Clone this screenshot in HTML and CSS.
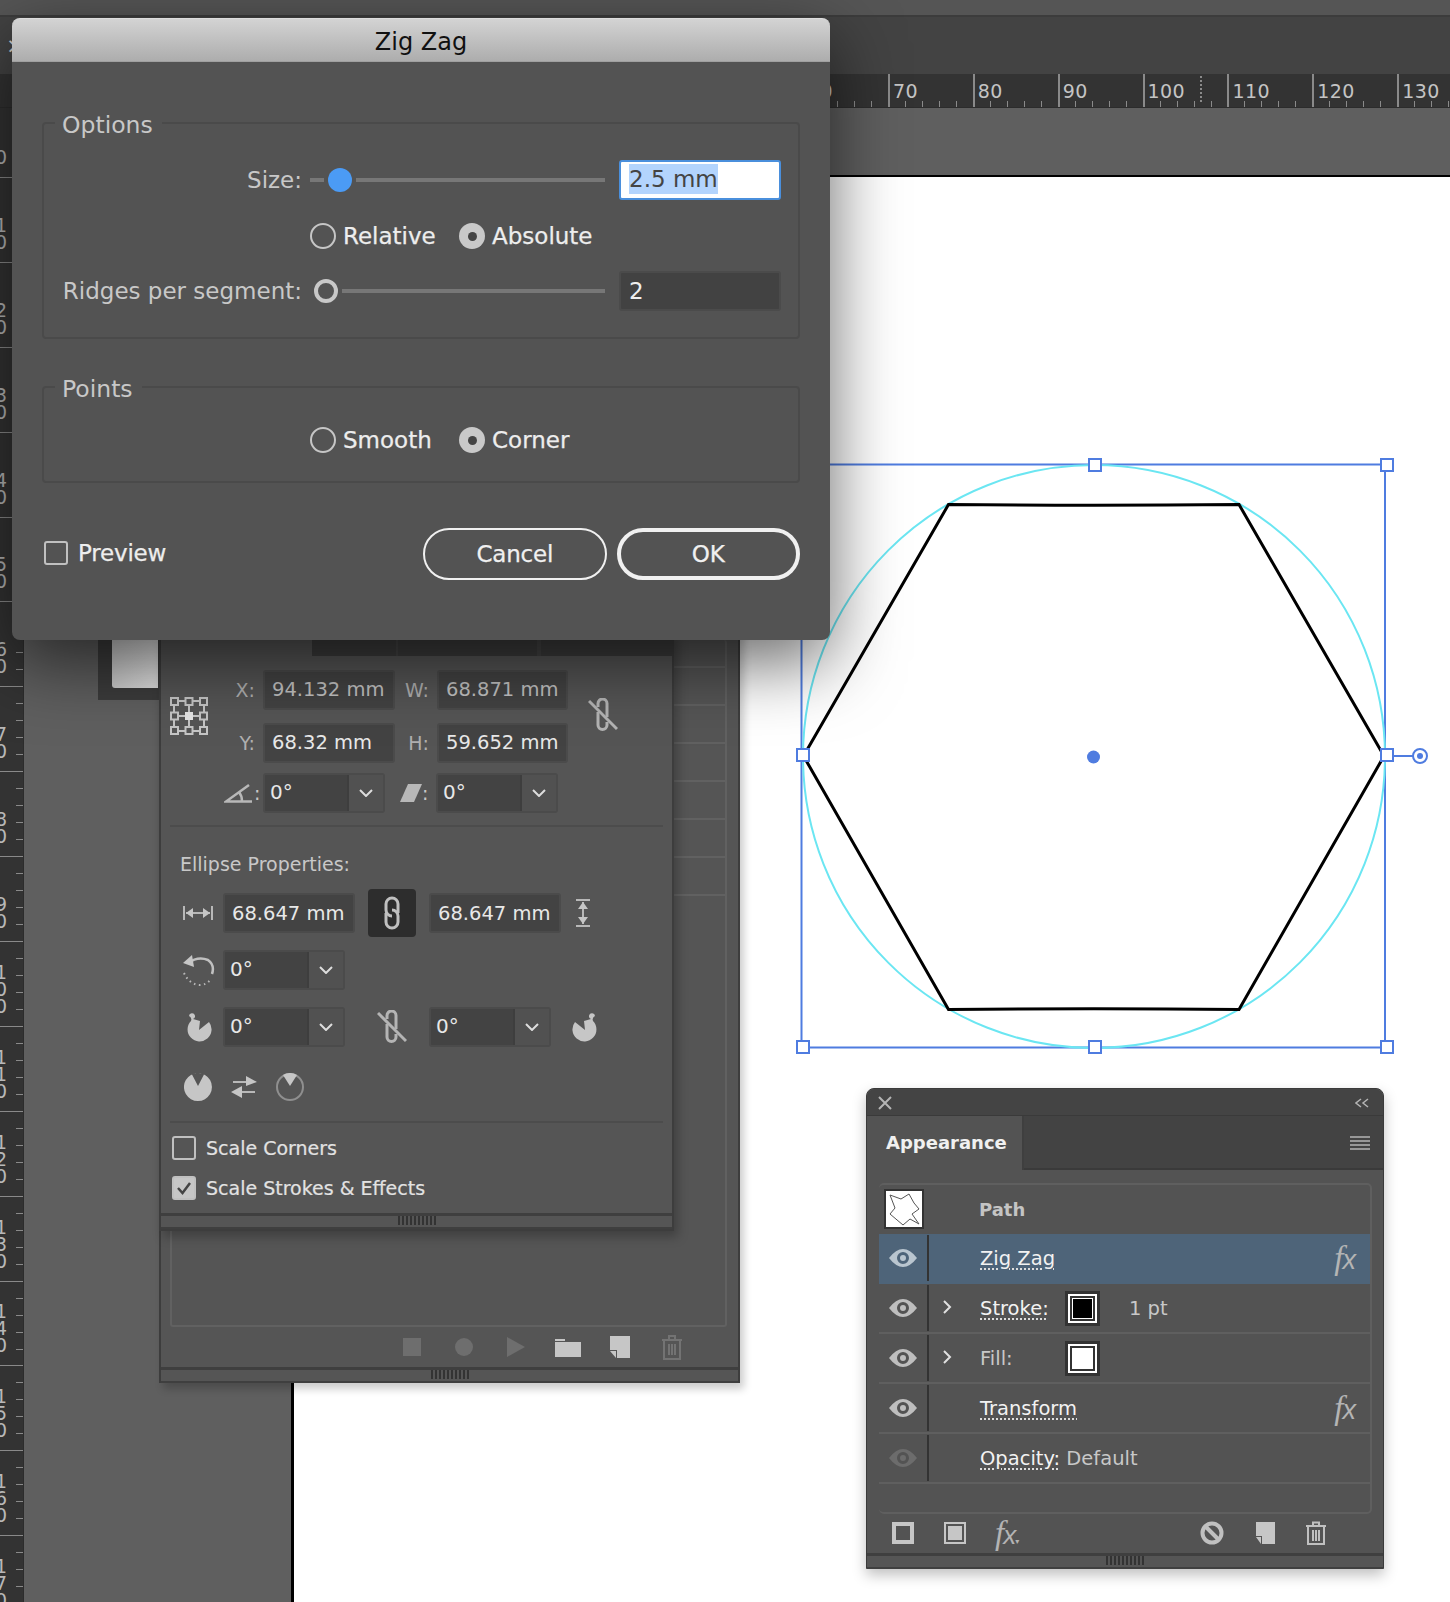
FILE: index.html
```html
<!DOCTYPE html>
<html lang="en">
<head>
<meta charset="utf-8">
<title>Zig Zag</title>
<link rel="stylesheet" href="styles.css">
</head>
<body>
<div class="app">
  <div class="menubar"></div>
  <div class="controlbar"><span class="stray-x">×</span></div>
  <div class="hruler">
    <div class="hr-cell"><span>60</span></div>
    <div class="hr-cell"><span>70</span></div>
    <div class="hr-cell"><span>80</span></div>
    <div class="hr-cell"><span>90</span></div>
    <div class="hr-cell"><span>100</span></div>
    <div class="hr-cell"><span>110</span></div>
    <div class="hr-cell"><span>120</span></div>
    <div class="hr-cell"><span>130</span></div>
    <i class="hr-mark"></i>
  </div>
  <div class="workspace">
    <div class="vruler">
      <div class="vr-cell vr-first"><b>0</b></div>
      <div class="vr-cell"><b>1</b><b>0</b></div>
      <div class="vr-cell"><b>2</b><b>0</b></div>
      <div class="vr-cell"><b>3</b><b>0</b></div>
      <div class="vr-cell"><b>4</b><b>0</b></div>
      <div class="vr-cell"><b>5</b><b>0</b></div>
      <div class="vr-cell"><b>6</b><b>0</b></div>
      <div class="vr-cell"><b>7</b><b>0</b></div>
      <div class="vr-cell"><b>8</b><b>0</b></div>
      <div class="vr-cell"><b>9</b><b>0</b></div>
      <div class="vr-cell"><b>1</b><b>0</b><b>0</b></div>
      <div class="vr-cell"><b>1</b><b>1</b><b>0</b></div>
      <div class="vr-cell"><b>1</b><b>2</b><b>0</b></div>
      <div class="vr-cell"><b>1</b><b>3</b><b>0</b></div>
      <div class="vr-cell"><b>1</b><b>4</b><b>0</b></div>
      <div class="vr-cell"><b>1</b><b>5</b><b>0</b></div>
      <div class="vr-cell"><b>1</b><b>6</b><b>0</b></div>
      <div class="vr-cell"><b>1</b><b>7</b><b>0</b></div>
    </div>
    <div class="pasteboard">
      <div class="artboard"></div>
    </div>
  </div>

  <svg class="artwork" width="650" height="620" viewBox="790 450 650 620">
    <polyline class="art-bbox" points="800,464.500 1385,464.500 1385,1047.500 801.500,1047.500 801.500,640"/>
    <ellipse class="art-circle" cx="1094" cy="756.500" rx="291" ry="291.500"/>
    <path class="art-hex" d="M803.500 756 L948.500 504.500 Q1094 506 1239 504.500 L1384 756 L1239 1009.500 Q1094 1008 948.500 1009.500 Z"/>
    <path class="art-bbox" d="M1388 756H1413"/>
    <circle class="art-rot" cx="1420" cy="756" r="7"/>
    <circle class="art-dot" cx="1420" cy="756" r="3"/>
    <circle class="art-dot" cx="1093.500" cy="757" r="6.500"/>
    <g class="art-handles">
      <rect x="1089" y="459" width="12" height="12"/>
      <rect x="1381" y="459" width="12" height="12"/>
      <rect x="797" y="749" width="12" height="12"/>
      <rect x="1381" y="749" width="12" height="12"/>
      <rect x="797" y="1041" width="12" height="12"/>
      <rect x="1089" y="1041" width="12" height="12"/>
      <rect x="1381" y="1041" width="12" height="12"/>
    </g>
  </svg>

  <section class="win actions-panel">
    <div class="act-list">
      <div class="act-row"></div><div class="act-row"></div><div class="act-row"></div>
      <div class="act-row"></div><div class="act-row"></div><div class="act-row"></div><div class="act-row"></div>
    </div>
    <div class="act-tools">
      <svg width="22" height="22" viewBox="0 0 22 22" class="ic-dim"><rect x="2" y="2" width="18" height="18"/></svg>
      <svg width="22" height="22" viewBox="0 0 22 22" class="ic-dim"><circle cx="11" cy="11" r="9"/></svg>
      <svg width="22" height="22" viewBox="0 0 22 22" class="ic-dim"><path d="M2 1L20 11L2 21Z"/></svg>
      <svg width="28" height="22" viewBox="0 0 28 22" class="ic-on"><path d="M1 3H11V5H1ZM1 6H27V21H1Z"/></svg>
      <svg width="22" height="24" viewBox="0 0 22 24" class="ic-on"><path d="M1 1H21V23H8V15H1Z"/><path d="M1 16H7V23Z"/></svg>
      <svg width="22" height="26" viewBox="0 0 22 26" class="ic-line-dim"><path d="M1 6H21M8 6V2H14V6M3 6V25H19V6M8 10V21M11 10V21M14 10V21"/></svg>
    </div>
    <div class="grip-bar"><div class="grip"></div></div>
  </section>

  <div class="win stub"><div class="stub-light"></div></div>

  <section class="win transform">
    <div class="tf-tabs"><i></i><i></i><i></i></div>
    <div class="tf-top">
      <svg class="anchor" width="38" height="38" viewBox="0 0 38 38">
        <path d="M9 4H15M23 4H29M9 19H15M23 19H29M9 34H15M23 34H29M4 9V15M19 9V15M34 9V15M4 23V29M19 23V29M34 23V29"/>
        <g class="anchor-cells">
          <rect x="1" y="1" width="7" height="7"/><rect x="15.500" y="1" width="7" height="7"/><rect x="30" y="1" width="7" height="7"/>
          <rect x="1" y="15.500" width="7" height="7"/><rect x="30" y="15.500" width="7" height="7"/>
          <rect x="1" y="30" width="7" height="7"/><rect x="15.500" y="30" width="7" height="7"/><rect x="30" y="30" width="7" height="7"/>
        </g>
        <rect class="anchor-on" x="15" y="15" width="8" height="8"/>
      </svg>
      <div class="tf-grid">
        <span class="lbl">X:</span><div class="field dim">94.132 mm</div>
        <span class="lbl">W:</span><div class="field dim">68.871 mm</div>
        <span class="lbl">Y:</span><div class="field">68.32 mm</div>
        <span class="lbl">H:</span><div class="field">59.652 mm</div>
      </div>
      <svg class="linkoff linkoff-top" width="30" height="34" viewBox="0 0 30 34">
        <path d="M10 9V5.500A4.500 4.500 0 0 1 19 5.500V19M10 14V27A4.500 4.500 0 0 0 19 27V24"/>
        <path d="M1 3L29 31"/>
      </svg>
    </div>
    <div class="tf-row3">
      <span class="lbl-ic">
        <svg width="30" height="20" viewBox="0 0 30 20"><path class="angle" d="M25 2L2 18.500H28M15 9Q18 13 18 18"/></svg>:
      </span>
      <div class="dd w122"><span>0°</span><em><svg width="14" height="8" viewBox="0 0 14 8"><path d="M1 1L7 7L13 1"/></svg></em></div>
      <span class="lbl-ic shear">
        <svg width="22" height="20" viewBox="0 0 22 20"><path d="M8 1H22L14 19H0Z"/></svg>:
      </span>
      <div class="dd w122"><span>0°</span><em><svg width="14" height="8" viewBox="0 0 14 8"><path d="M1 1L7 7L13 1"/></svg></em></div>
    </div>
    <hr class="sep">
    <h4 class="ell-title">Ellipse Properties:</h4>
    <div class="ell-row r1">
      <svg class="ic-w" width="30" height="16" viewBox="0 0 30 16"><path class="st" d="M1 1V15M29 1V15M3 8H27"/><path class="fl" d="M3 8L10 3V13ZM27 8L20 3V13Z"/></svg>
      <div class="field fw132">68.647 mm</div>
      <button class="linkbtn"><svg width="18" height="34" viewBox="0 0 18 34"><path d="M15 17V8A6 6 0 0 0 3 8V14A6 6 0 0 0 9 20"/><path d="M3 17V26A6 6 0 0 0 15 26V20A6 6 0 0 0 9 14"/></svg></button>
      <div class="field fw132">68.647 mm</div>
      <svg class="ic-h" width="14" height="28" viewBox="0 0 14 28"><path class="st" d="M0 1H14M0 27H14M7 3V25"/><path class="fl" d="M7 3L12 10H2ZM7 25L12 18H2Z"/></svg>
    </div>
    <div class="ell-row r2">
      <svg class="ic-rot" width="32" height="32" viewBox="0 0 32 32">
        <path class="st3" d="M5 9Q15 2 25 6Q32 11 29 20"/><path class="fl" d="M0 9L9 1L11 13Z"/>
        <path class="dots" d="M1 19Q6 30 16 31Q24 31 28 25"/>
      </svg>
      <div class="dd w122"><span>0°</span><em><svg width="14" height="8" viewBox="0 0 14 8"><path d="M1 1L7 7L13 1"/></svg></em></div>
    </div>
    <div class="ell-row r3">
      <svg class="ic-pie" width="26" height="30" viewBox="0 0 26 30"><path class="fl" d="M14 9L13 18L23 10A12 12 0 1 1 5 9A4 4 0 0 0 3 4A3 3 0 1 1 7 7Z"/></svg>
      <div class="dd w122"><span>0°</span><em><svg width="14" height="8" viewBox="0 0 14 8"><path d="M1 1L7 7L13 1"/></svg></em></div>
      <svg class="linkoff mid" width="30" height="34" viewBox="0 0 30 34">
        <path d="M10 9V5.500A4.500 4.500 0 0 1 19 5.500V19M10 14V27A4.500 4.500 0 0 0 19 27V24"/>
        <path d="M1 3L29 31"/>
      </svg>
      <div class="dd w122"><span>0°</span><em><svg width="14" height="8" viewBox="0 0 14 8"><path d="M1 1L7 7L13 1"/></svg></em></div>
      <svg class="ic-pie2" width="26" height="30" viewBox="0 0 26 30"><path class="fl" d="M12 9L13 18L3 10A12 12 0 1 0 21 9A4 4 0 0 1 23 4A3 3 0 1 0 19 7Z"/></svg>
    </div>
    <div class="ell-row r4">
      <svg width="28" height="28" viewBox="0 0 28 28"><path class="fl" d="M14 0A14 14 0 1 1 13.900 0ZM8 1.500L14 13L20 1.500A14 14 0 0 0 8 1.500Z" fill-rule="evenodd"/></svg>
      <svg class="ic-swap" width="26" height="22" viewBox="0 0 26 22"><path class="st" d="M2 6H18M8 16H24"/><path class="fl" d="M26 6L15 0V10ZM0 16L11 10V22Z"/></svg>
      <svg class="ic-pieo" width="28" height="28" viewBox="0 0 28 28"><circle class="st" cx="14" cy="14" r="13"/><path class="fl" d="M7 2L14 13L21 2A14 14 0 0 0 7 2Z"/></svg>
    </div>
    <hr class="sep s2">
    <label class="chk chk1"><i class="box"></i>Scale Corners</label>
    <label class="chk"><i class="box on"><svg width="16" height="14" viewBox="0 0 16 14"><path d="M2 7L6.500 12L14 2"/></svg></i>Scale Strokes &amp; Effects</label>
    <div class="grip-bar"><div class="grip"></div></div>
  </section>

  <section class="win dialog">
    <header class="dlg-title">Zig Zag</header>
    <div class="dlg-body">
      <fieldset class="group g-options">
        <legend>Options</legend>
        <div class="opt-row size-row">
          <span class="opt-label">Size:</span>
          <div class="slider"><i class="track t-short"></i><i class="thumb blue"></i><i class="track"></i></div>
          <div class="num focus"><mark>2.5 mm</mark></div>
        </div>
        <div class="radio-row r-mid">
          <label class="radio"><i class="rd"></i>Relative</label>
          <label class="radio sec"><i class="rd on"></i>Absolute</label>
        </div>
        <div class="opt-row ridge-row">
          <span class="opt-label">Ridges per segment:</span>
          <div class="slider"><i class="thumb ring"></i><i class="track"></i></div>
          <div class="num">2</div>
        </div>
      </fieldset>
      <fieldset class="group g-points">
        <legend>Points</legend>
        <div class="radio-row">
          <label class="radio"><i class="rd"></i>Smooth</label>
          <label class="radio sec"><i class="rd on"></i>Corner</label>
        </div>
      </fieldset>
      <div class="dlg-foot">
        <label class="preview"><i class="box big"></i>Preview</label>
        <div class="btns">
          <button class="btn">Cancel</button>
          <button class="btn primary">OK</button>
        </div>
      </div>
    </div>
  </section>

  <section class="win appearance">
    <div class="ap-head">
      <svg class="ap-x" width="14" height="14" viewBox="0 0 14 14"><path d="M1 1L13 13M13 1L1 13"/></svg>
      <svg class="ap-coll" width="14" height="10" viewBox="0 0 14 10"><path d="M6 1L1 5L6 9M13 1L8 5L13 9"/></svg>
    </div>
    <div class="ap-tabs">
      <div class="ap-tab">Appearance</div>
      <svg class="ap-menu" width="20" height="14" viewBox="0 0 20 14"><path d="M0 1H20M0 5H20M0 9H20M0 13H20"/></svg>
    </div>
    <div class="ap-list">
      <div class="ap-row ap-path">
        <div class="thumb-box"><svg width="34" height="34" viewBox="0 0 34 34"><path d="M3 3L14 7L22 2L27 11L32 17L25 22L32 32L23 27L16 33L3 22L8 16Z"/></svg></div>
        <span class="ap-name muted b">Path</span>
      </div>
      <div class="ap-row sel">
        <span class="eye"><svg width="28" height="18" viewBox="0 0 28 18"><path class="eye-s" fill-rule="evenodd" d="M0 9Q7 0 14 0T28 9Q21 18 14 18T0 9ZM14 3A6 6 0 1 0 14 15A6 6 0 1 0 14 3ZM14 6A3 3 0 1 1 14 12A3 3 0 1 1 14 6Z"/></svg></span>
        <span class="ap-name"><u>Zig Zag</u></span>
        <span class="fx"><i>f</i>x</span>
      </div>
      <div class="ap-row">
        <span class="eye"><svg width="28" height="18" viewBox="0 0 28 18"><path class="eye-s" fill-rule="evenodd" d="M0 9Q7 0 14 0T28 9Q21 18 14 18T0 9ZM14 3A6 6 0 1 0 14 15A6 6 0 1 0 14 3ZM14 6A3 3 0 1 1 14 12A3 3 0 1 1 14 6Z"/></svg></span>
        <svg class="chev" width="9" height="14" viewBox="0 0 9 14"><path d="M1 1L7 7L1 13"/></svg>
        <span class="ap-name tight"><u>Stroke:</u></span>
        <span class="swatch black"><i><b></b></i></span>
        <span class="ap-val">1 pt</span>
      </div>
      <div class="ap-row">
        <span class="eye"><svg width="28" height="18" viewBox="0 0 28 18"><path class="eye-s" fill-rule="evenodd" d="M0 9Q7 0 14 0T28 9Q21 18 14 18T0 9ZM14 3A6 6 0 1 0 14 15A6 6 0 1 0 14 3ZM14 6A3 3 0 1 1 14 12A3 3 0 1 1 14 6Z"/></svg></span>
        <svg class="chev" width="9" height="14" viewBox="0 0 9 14"><path d="M1 1L7 7L1 13"/></svg>
        <span class="ap-name tight fillname">Fill:</span>
        <span class="swatch"><i><b></b></i></span>
      </div>
      <div class="ap-row">
        <span class="eye"><svg width="28" height="18" viewBox="0 0 28 18"><path class="eye-s" fill-rule="evenodd" d="M0 9Q7 0 14 0T28 9Q21 18 14 18T0 9ZM14 3A6 6 0 1 0 14 15A6 6 0 1 0 14 3ZM14 6A3 3 0 1 1 14 12A3 3 0 1 1 14 6Z"/></svg></span>
        <span class="ap-name"><u>Transform</u></span>
        <span class="fx"><i>f</i>x</span>
      </div>
      <div class="ap-row">
        <span class="eye off"><svg width="28" height="18" viewBox="0 0 28 18"><path class="eye-s" fill-rule="evenodd" d="M0 9Q7 0 14 0T28 9Q21 18 14 18T0 9ZM14 3A6 6 0 1 0 14 15A6 6 0 1 0 14 3ZM14 6A3 3 0 1 1 14 12A3 3 0 1 1 14 6Z"/></svg></span>
        <span class="ap-name"><u>Opacity:</u> <span class="ap-def">Default</span></span>
      </div>
    </div>
    <div class="ap-tools">
      <svg width="22" height="22" viewBox="0 0 22 22"><path class="fl" fill-rule="evenodd" d="M0 0H22V22H0ZM4 4V18H18V4Z"/></svg>
      <svg class="t2" width="22" height="22" viewBox="0 0 22 22"><path class="fl" fill-rule="evenodd" d="M0 0H22V22H0ZM2 2V20H20V2Z"/><rect class="fl" x="4" y="4" width="14" height="14"/></svg>
      <span class="fx t3"><i>f</i>x<small>▾</small></span>
      <svg class="t4" width="24" height="24" viewBox="0 0 24 24"><circle class="st3" cx="12" cy="12" r="9.500"/><path class="st3" d="M5 5L19 19"/></svg>
      <svg class="t5" width="21" height="24" viewBox="0 0 21 24"><path class="fl" d="M1 1H20V23H7V15H1Z"/><path class="fl" d="M1 16H6V23Z"/></svg>
      <svg class="t6" width="22" height="24" viewBox="0 0 22 24"><path class="st2" d="M1 5H21M8 5V1.500H14V5M3 5V23H19V5M8 9V20M11 9V20M14 9V20"/></svg>
    </div>
    <div class="grip-bar"><div class="grip"></div></div>
  </section>
</div>
</body>
</html>
```
FILE: styles.css
```css
* { box-sizing: border-box; }
html, body { margin: 0; padding: 0; }
body { width: 1450px; height: 1602px; overflow: hidden; background: #5f5f5f; font-family: "DejaVu Sans", sans-serif; }
.app { position: relative; width: 1450px; height: 1602px; overflow: hidden; display: flex; flex-direction: column; }

/* chrome */
.menubar { height: 17px; flex: none; background: #555; border-bottom: 2px solid #3c3c3c; }
.controlbar { height: 57px; flex: none; background: #434343; position: relative; }
.stray-x { position: absolute; left: 6px; top: 17px; color: #d0d0d0; font-size: 22px; line-height: 24px; }
.hruler {
  height: 34px; flex: none; background: #333; padding-left: 803px; display: flex; position: relative; overflow: hidden;
  border-bottom: 1px solid #2c2c2c;
}
.hr-cell {
  flex: 0 0 84.9px; height: 100%; position: relative; color: #c4c4c4; font-size: 19px; line-height: 24px; letter-spacing: .4px;
  border-left: 2px solid #8a8a8a;
  background: repeating-linear-gradient(to right, transparent 0, transparent 15px, #8a8a8a 15px, #8a8a8a 16px, transparent 16px, transparent 17px) 0 100% / 100% 6px no-repeat;
}
.hr-cell span { display: block; padding: 5px 0 0 3px; }
.hr-mark { position: absolute; left: 1200px; top: 2px; height: 26px; border-left: 2px dotted #8a8a8a; }

.workspace { flex: 1; display: flex; min-height: 0; }
.vruler {
  width: 24px; flex: none; background: #333; overflow: hidden; position: relative;
  padding-top: 0; border-right: 1px solid #2c2c2c;
}
.vr-cell {
  height: 84.9px; display: flex; flex-direction: column; justify-content: flex-end; padding-bottom: 11px; overflow: hidden;
  border-bottom: 1px solid #8a8a8a;
  background: repeating-linear-gradient(to bottom, transparent 0, transparent 16px, #8a8a8a 16px, #8a8a8a 17px) 100% 0 / 7px 100% no-repeat;
}
.vr-first { height: 70px; }
.vr-cell b { display: block; font-weight: 400; font-size: 19px; line-height: 17px; color: #b8b8b8; margin-left: -5px; }
.pasteboard { flex: 1; background: #5f5f5f; padding: 67px 0 0 267px; }
.artboard { height: 100%; background: #fff; border-top: 2px solid #000; border-left: 3px solid #000; }

/* artwork */
.artwork { position: absolute; left: 790px; top: 450px; fill: none; }
.art-bbox { fill: none; stroke: #4f7ce0; stroke-width: 2; }
.art-circle { fill: none; stroke: #6be6f2; stroke-width: 2; }
.art-hex { fill: none; stroke: #000; stroke-width: 3; stroke-linejoin: miter; }
.art-rot { fill: #fff; stroke: #4f7ce0; stroke-width: 2; }
.art-dot { fill: #4f7ce0; }
.art-handles rect { fill: #fff; stroke: #4f7ce0; stroke-width: 2; }

/* windows */
.win { position: absolute; }
.stub { left: 98px; top: 620px; width: 70px; height: 80px; background: #3c3c3c; padding: 0 10px 12px 14px; }
.stub-light { height: 100%; background: linear-gradient(to right, #ccc, #e2e2e2); border-radius: 0 0 0 3px; }

.actions-panel {
  left: 159px; top: 625px; width: 581px; height: 758px; background: #555;
  border: 2px solid #3d3d3d; border-top: none;
  box-shadow: 4px 6px 8px rgba(0,0,0,.2);
  display: flex; flex-direction: column;
}
.act-list {
  margin: 15px 11px 0 9px; height: 687px; flex: none; border: 2px solid #616161; border-top: 0; border-radius: 3px; display: flex; flex-direction: column;
}
.act-row { height: 38px; flex: none; border-bottom: 2px solid #616161; }
.act-row:first-child { height: 28px; }
.act-tools { height: 40px; flex: none; display: flex; align-items: center; padding: 0 0 0 240px; gap: 30px; }
.act-tools svg:nth-child(4) { margin: 0 -3px; }
.ic-dim { fill: #6e6e6e; }
.ic-on { fill: #c6c6c6; }
.ic-line-dim { fill: none; stroke: #737373; stroke-width: 2; }
.grip-bar { height: 16px; flex: none; border-top: 3px solid #3f3f3f; border-bottom: 2px solid #3f3f3f; background: #555; display: flex; justify-content: center; }
.grip { width: 38px; height: 9px; background: repeating-linear-gradient(to right, #333 0, #333 2px, transparent 2px, transparent 4px); }
.actions-panel .grip-bar { margin-top: auto; }

.transform {
  left: 159px; top: 630px; width: 515px; height: 601px; background: #555;
  border: 2px solid #3d3d3d; border-top: none; padding: 10px 0 0 0;
  box-shadow: 4px 6px 10px rgba(0,0,0,.25);
  display: flex; flex-direction: column; color: #c8c8c8;
}
.tf-tabs { position: absolute; left: 151px; top: 8px; width: 362px; height: 18px; display: flex; background: #3c3c3c; }
.tf-tabs i { display: block; border-right: 2px solid #444; }
.tf-tabs i:nth-child(1) { width: 86px; }
.tf-tabs i:nth-child(2) { width: 141px; }
.tf-top { display: flex; align-items: center; margin-top: 30px; padding-left: 9px; height: 92px; }
.anchor { fill: none; stroke: #c6c6c6; stroke-width: 2; flex: none; }
.anchor-cells rect { fill: #555; stroke: #c6c6c6; stroke-width: 2; }
.anchor-on { fill: #e6e6e6; stroke: none; }
.tf-grid { display: grid; grid-template-columns: 47px 132px 42px 131px; row-gap: 13px; align-items: center; margin-left: 8px; }
.lbl { text-align: right; padding-right: 8px; font-size: 19px; font-weight: 400; color: #b0b0b0; }
.field {
  height: 40px; background: #434343; border: 2px solid #4b4b4b; border-radius: 3px; color: #e8e8e8;
  font-size: 19.500px; line-height: 35px; padding-left: 7px; white-space: nowrap;
}
.field.dim { color: #c4c4c4; }
.linkoff { fill: none; stroke: #b4b4b4; stroke-width: 3; flex: none; }
.linkoff-top { margin-left: 20px; margin-top: -2px; }
.tf-row3 { display: flex; align-items: center; margin-top: 11px; height: 40px; padding-left: 63px; }
.lbl-ic { display: flex; align-items: center; width: 39px; font-size: 19px; color: #c8c8c8; font-weight: 400; }
.lbl-ic svg { flex: none; }
.angle { fill: none; stroke: #b8b8b8; stroke-width: 2.500; }
.shear { width: 29px; margin: 0 7px 0 15px; }
.shear svg { fill: #b8b8b8; }
.dd { height: 40px; display: flex; background: #434343; border: 2px solid #4b4b4b; border-radius: 3px; color: #e8e8e8; font-size: 20px; line-height: 34px; flex: none; }
.dd span { flex: 1; padding-left: 5px; }
.dd em { width: 36px; flex: none; background: #515151; border-left: 2px solid #3e3e3e; display: flex; align-items: center; justify-content: center; }
.dd em svg { fill: none; stroke: #ddd; stroke-width: 2; }
.w122 { width: 122px; }
.sep { border: 0; height: 2px; background: #4c4c4c; margin: 12px 10px 0 9px; flex: none; width: 493px; }
.s2 { margin-top: 20px; }
.ell-title { margin: 25px 0 0 19px; font-size: 19px; line-height: 24px; font-weight: 400; color: #c8c8c8; }
.ell-row { display: flex; align-items: center; height: 40px; position: relative; flex: none; }
.st { fill: none; stroke: #b8b8b8; stroke-width: 2; }
.fl { fill: #c6c6c6; }
.r1 { margin-top: 17px; padding-left: 22px; }
.r1 .field { width: 132px; line-height: 37px; }
.ic-w { margin-right: 10px; flex: none; }
.linkbtn { width: 48px; height: 48px; margin: 0 13px; background: #2d2d2d; border: 0; border-radius: 4px; padding: 0; display: flex; align-items: center; justify-content: center; flex: none; }
.linkbtn svg { fill: none; stroke: #c0c0c0; stroke-width: 3; }
.ic-h { margin-left: 15px; flex: none; }
.r2 { margin-top: 17px; padding-left: 22px; gap: 8px; }
.ic-rot { flex: none; }
.dots { fill: none; stroke: #b8b8b8; stroke-width: 2; stroke-dasharray: 1.500 3.500; }
.r3 { margin-top: 17px; padding-left: 25px; }
.ic-pie { margin-right: 11px; flex: none; }
.linkoff.mid { margin: 0 22px 0 32px; }
.ic-pie2 { margin-left: 21px; flex: none; }
.r4 { margin-top: 26px; padding-left: 23px; gap: 19px; height: 28px; }
.ic-pieo .st { stroke: #8f8f8f; }
.chk { display: flex; align-items: center; gap: 10px; height: 24px; margin: 14px 0 0 11px; color: #e2e2e2; font-size: 19px; -webkit-text-stroke: .2px #e2e2e2; }
.chk1 { margin-top: 13px; }
.chk + .chk { margin-top: 16px; }
.box { display: flex; width: 24px; height: 24px; border: 2px solid #c0c0c0; border-radius: 3px; flex: none; align-items: center; justify-content: center; }
.box.on { background: #c6c6c6; }
.box.on svg { fill: none; stroke: #444; stroke-width: 2.500; }
.transform .grip-bar { margin-top: auto; }

/* dialog */
.dialog {
  left: 12px; top: 18px; width: 818px; height: 622px; background: #535353; border-radius: 8px;
  box-shadow: 0 22px 70px rgba(0,0,0,.6);
  display: flex; flex-direction: column;
}
.dlg-title {
  height: 44px; flex: none; border-radius: 8px 8px 0 0; text-align: center; font-size: 24px; line-height: 44px; color: #111;
  padding-top: 1px;
  background: linear-gradient(to bottom, #d3d3d3, #adadad); border-bottom: 1px solid #a0a0a0; border-top: 1px solid #ddd;
}
.dlg-body { flex: 1; position: relative; padding: 61px 30px 0 30px; color: #e2e2e2; display: flex; flex-direction: column; }
.group { border: 2px solid #4a4a4a; border-radius: 4px; margin: 0; padding: 0; min-width: 0; flex: none; }
.group legend { margin-left: 11px; padding: 4px 9px 0 7px; color: #c8c8c8; font-size: 23.500px; line-height: 28px; }
.g-options { height: 232px; margin-top: -16px; }
.opt-row { display: flex; align-items: center; height: 40px; }
.opt-label { width: 258px; flex: none; text-align: right; color: #c8c8c8; font-size: 23px; white-space: nowrap; }
.size-row { margin-top: 21px; }
.slider { width: 309px; margin-left: 8px; padding-right: 14px; display: flex; align-items: center; flex: none; }
.track { display: block; height: 4px; background: #777; flex: 1; }
.t-short { flex: 0 0 14px; }
.thumb { display: block; width: 24px; height: 24px; border-radius: 50%; flex: none; margin-right: 4px; }
.blue { background: #4b9bf5; margin-left: 4px; margin-right: 4px; }
.ring { border: 4px solid #c8c8c8; margin-left: 4px; }
.num { width: 162px; height: 40px; background: #424242; border: 2px solid #4b4b4b; border-radius: 3px; font-size: 23px; line-height: 36px; padding-left: 8px; color: #eee; flex: none; }
.focus { background: #fff; border-color: #4a8fdc; color: #444; }
.focus mark { background: #b3d4fd; color: #444; display: inline-block; height: 30px; line-height: 31px; vertical-align: top; margin-top: 2px; }
.radio-row { display: flex; padding-left: 266px; height: 32px; align-items: center; }
.r-mid { margin-top: 20px; }
.ridge-row { margin-top: 19px; }
.radio { display: flex; align-items: center; gap: 7px; font-size: 23px; color: #ededed; width: 149px; -webkit-text-stroke: .25px #ededed; }
.rd { display: block; width: 26px; height: 26px; border-radius: 50%; border: 2px solid #c6c6c6; flex: none; }
.rd.on { background: #c9c9c9; border: 0; display: flex; align-items: center; justify-content: center; }
.rd.on::after { content: ""; width: 9px; height: 9px; border-radius: 50%; background: #444; }
.g-points { height: 112px; margin-top: 32px; }
.g-points .radio-row { margin-top: 21px; }
.dlg-foot { display: flex; align-items: center; justify-content: space-between; margin-top: 45px; height: 52px; flex: none; padding-left: 2px; }
.preview { display: flex; align-items: center; gap: 10px; font-size: 23px; color: #ededed; letter-spacing: -.2px; margin-top: -2px; -webkit-text-stroke: .25px #ededed; }
.box.big { width: 24px; height: 24px; }
.btns { display: flex; gap: 10px; }
.btn { width: 183.500px; height: 52px; background: transparent; border: 2px solid #f0f0f0; border-radius: 26px; color: #f0f0f0; font: 400 23px "DejaVu Sans", sans-serif; letter-spacing: -.2px; -webkit-text-stroke: .25px #f0f0f0; }
.primary { border-width: 4px; }

/* appearance */
.appearance {
  left: 866px; top: 1088px; width: 518px; height: 481px; background: #535353; border-radius: 8px 8px 0 0;
  border: 1px solid #3a3a3a; box-shadow: 0 6px 14px rgba(0,0,0,.25); display: flex; flex-direction: column;
}
.ap-head { height: 27px; flex: none; background: #444; border-radius: 8px 8px 0 0; display: flex; align-items: center; justify-content: space-between; padding: 2px 14px 0 11px; border-bottom: 1px solid #3a3a3a; }
.ap-x { fill: none; stroke: #b4b4b4; stroke-width: 2; }
.ap-coll { fill: none; stroke: #b4b4b4; stroke-width: 1.500; }
.ap-tabs { height: 54px; flex: none; background: #434343; display: flex; align-items: center; justify-content: space-between; padding-right: 13px; border-bottom: 2px solid #3a3a3a; }
.ap-tab { width: 157px; height: 54px; margin-bottom: -2px; background: #535353; color: #f0f0f0; font-weight: 700; font-size: 18px; line-height: 54px; padding-left: 19px; border-right: 2px solid #3f3f3f; }
.ap-menu { fill: none; stroke: #b4b4b4; stroke-width: 1.500; margin-top: 2px; }
.ap-list { margin: 13px 11px 0 12px; height: 331px; border: 2px solid #5f5f5f; border-left-width: 0; border-radius: 5px; display: flex; flex-direction: column; flex: none; }
.ap-row { height: 50px; flex: none; display: flex; align-items: center; border-bottom: 2px solid #5f5f5f; position: relative; color: #f2f2f2; font-size: 19.500px; }
.ap-path { height: 48px; border-bottom: 0; }
.thumb-box { width: 40px; height: 40px; margin-left: 5px; background: #fff; border: 2px solid #333; display: flex; align-items: center; justify-content: center; flex: none; }
.thumb-box svg { fill: none; stroke: #555; stroke-width: 1; }
.ap-path .ap-name { margin-left: 55px; font-size: 18px; }
.muted { color: #c4c4c4; }
.b { font-weight: 700; }
.sel { background: #4e6479; border-bottom-color: #4e6479; margin-top: 1px; }
.eye { width: 50px; height: 46px; flex: none; display: flex; align-items: center; justify-content: center; border-right: 2px solid #333; margin-right: 51px; }
.eye-s { fill: #bebebe; }
.sel .eye-s { fill: #b9c5cf; }
.eye.off .eye-s { fill: #6c6c6c; }
.chev { fill: none; stroke: #e0e0e0; stroke-width: 2; position: absolute; left: 64px; top: 16px; }
.ap-name u { text-decoration: underline dotted #ddd 2px; text-underline-offset: 4px; }
.ap-name.tight { width: 85px; }
.fillname { color: #c8c8c8; }
.fx { margin-left: auto; margin-right: 15px; font: italic 300 27px "Liberation Sans", sans-serif; color: #b4b4b4; letter-spacing: -1px; }
.fx i { font: italic 400 33px "Liberation Serif", serif; }
.swatch { width: 35px; height: 35px; background: #333; padding: 3px; flex: none; }
.swatch i { display: block; height: 100%; background: #fff; padding: 2px; }
.swatch b { display: block; height: 100%; border: 2px solid #333; background: #fff; padding: 1px; }
.black b::after { content: ""; display: block; height: 100%; background: #000; }
.ap-val { margin-left: 29px; color: #c8c8c8; }
.ap-def { color: #c8c8c8; }
.ap-tools { height: 40px; flex: none; display: flex; align-items: center; padding-left: 25px; margin-top: -1px; }
.t2 { margin-left: 30px; }
.ap-tools .fx { margin: 0 0 0 29px; font-size: 26px; line-height: 24px; }
.ap-tools .fx small { font: 400 8px "DejaVu Sans", sans-serif; }
.t5 { margin-left: 31px; }
.t6 { margin-left: 29px; }
.ap-tools .t3 { width: 34px; flex: none; }
.ap-tools .t4 { margin-left: 171px; }
.st3 { fill: none; stroke: #c0c0c0; stroke-width: 4; }
.ic-rot .st3 { stroke-width: 2.500; }
.st2 { fill: none; stroke: #c0c0c0; stroke-width: 2; }
.appearance .grip-bar { margin-top: auto; }
```
